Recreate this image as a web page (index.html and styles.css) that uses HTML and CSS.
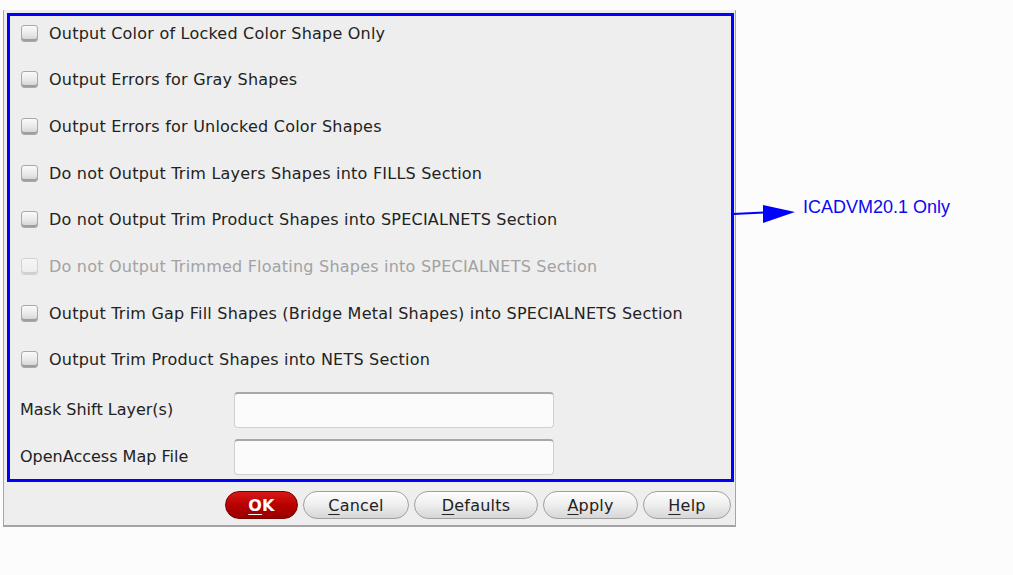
FILE: index.html
```html
<!DOCTYPE html>
<html>
<head>
<meta charset="utf-8">
<link rel="stylesheet" href="styles.css">
</head>
<body>
<div class="dialog">
  <div class="frame">
    <div class="checks">
      <label class="row"><span class="box"></span><span>Output Color of Locked Color Shape Only</span></label>
      <label class="row"><span class="box"></span><span>Output Errors for Gray Shapes</span></label>
      <label class="row"><span class="box"></span><span>Output Errors for Unlocked Color Shapes</span></label>
      <label class="row"><span class="box"></span><span>Do not Output Trim Layers Shapes into FILLS Section</span></label>
      <label class="row"><span class="box"></span><span>Do not Output Trim Product Shapes into SPECIALNETS Section</span></label>
      <label class="row disabled"><span class="box"></span><span>Do not Output Trimmed Floating Shapes into SPECIALNETS Section</span></label>
      <label class="row"><span class="box"></span><span>Output Trim Gap Fill Shapes (Bridge Metal Shapes) into SPECIALNETS Section</span></label>
      <label class="row"><span class="box"></span><span>Output Trim Product Shapes into NETS Section</span></label>
    </div>
    <div class="fields">
      <div class="field"><span class="flabel">Mask Shift Layer(s)</span><span class="input"></span></div>
      <div class="field"><span class="flabel">OpenAccess Map File</span><span class="input"></span></div>
    </div>
  </div>
  <div class="buttons">
    <span class="btn ok"><u>O</u>K</span>
    <span class="btn cancel"><u>C</u>ancel</span>
    <span class="btn defaults"><u>D</u>efaults</span>
    <span class="btn apply"><u>A</u>pply</span>
    <span class="btn help"><u>H</u>elp</span>
  </div>
</div>
<svg class="arrow" width="70" height="24" viewBox="0 0 70 24">
  <line x1="0" y1="10" x2="32" y2="8.5" stroke="#0000ff" stroke-width="2"/>
  <polygon points="30,1 62,8 30,19" fill="#0000ff"/>
</svg>
<div class="note">ICADVM20.1 Only</div>
</body>
</html>
```
FILE: styles.css
```css
html, body {
  margin: 0;
  padding: 0;
  background: #fcfcfc;
}
body {
  width: 1013px;
  height: 575px;
  position: relative;
  font-family: "DejaVu Sans", sans-serif;
  font-size: 16px;
  color: #222;
}
.dialog {
  margin: 10px 0 0 3px;
  width: 733px;
  height: 517px;
  box-sizing: border-box;
  background: #eeeeee;
  border-left: 1px solid #a6a6a6;
  border-right: 1px solid #a6a6a6;
  border-bottom: 2px solid #a4a4a4;
  padding: 3px 1px 0 3px;
  display: flex;
  flex-direction: column;
}
.frame {
  width: 727px;
  height: 469px;
  box-sizing: border-box;
  border: 3px solid #0000ff;
  padding: 2px 0 4px 0;
  display: flex;
  flex-direction: column;
}
.checks {
  display: flex;
  flex-direction: column;
  gap: 16.7px;
  padding-left: 11px;
}
.row {
  height: 30px;
  display: flex;
  align-items: center;
  gap: 11px;
  white-space: nowrap;
  letter-spacing: 0.22px;
}
.box {
  width: 15px;
  height: 15px;
  border: 1px solid #a9a9a9;
  border-radius: 3px;
  background: linear-gradient(#fafafa, #e8e8e8 55%, #cfcfcf);
  box-shadow: inset 0 -2px 0 #9e9e9e;
  flex: none;
}
.disabled {
  color: #a2a2a2;
}
.disabled .box {
  border-color: #d2d2d2;
  box-shadow: inset 0 -2px 0 #d0d0d0;
  background: linear-gradient(#f6f6f6, #ececec);
}
.fields {
  margin-top: 17px;
  display: flex;
  flex-direction: column;
  gap: 11px;
  padding-left: 10px;
}
.field {
  display: flex;
  align-items: center;
  height: 36px;
}
.flabel {
  width: 214px;
  flex: none;
}
.input {
  width: 320px;
  height: 36px;
  box-sizing: border-box;
  background: #fbfbfb;
  border: 1px solid #d0d0d0;
  border-top: 2px solid #a8a8a8;
  border-radius: 4px;
}
.buttons {
  margin-top: 9px;
  display: flex;
  justify-content: flex-end;
  gap: 5px;
  padding-right: 3px;
}
.btn {
  height: 28px;
  box-sizing: border-box;
  border: 1px solid #a0a0a0;
  border-radius: 14px;
  background: linear-gradient(#fdfdfd, #eeeeee 50%, #d6d6d6);
  display: flex;
  align-items: center;
  justify-content: center;
  color: #222;
  letter-spacing: 0.2px;
}
.btn u {
  text-decoration-thickness: 1px;
  text-underline-offset: 3px;
}
.ok {
  width: 73px;
  background: linear-gradient(#d81818, #b80000 50%, #980000);
  border-color: #7a0000;
  color: #fff;
  font-weight: bold;
}
.cancel { width: 106px; }
.defaults { width: 124px; }
.apply { width: 95px; }
.help { width: 88px; }
.arrow {
  position: absolute;
  left: 733px;
  top: 204px;
}
.note {
  position: absolute;
  left: 803px;
  top: 198px;
  font-family: "Liberation Sans", Arial, sans-serif;
  font-size: 18px;
  line-height: 18px;
  color: #0a0af0;
  white-space: nowrap;
}
```
